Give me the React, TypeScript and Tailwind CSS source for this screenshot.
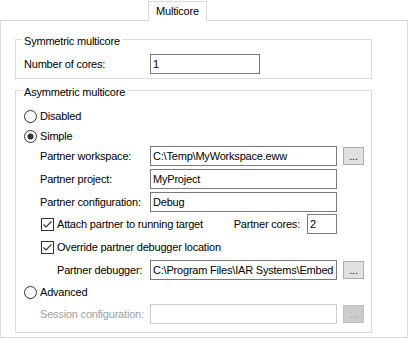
import React from 'react';

const Radio: React.FC<{ checked?: boolean }> = ({ checked }) => (
  <svg width="13" height="13" viewBox="0 0 13 13" className="shrink-0">
    <circle cx="6.5" cy="6.5" r="6" fill="#fff" stroke="#333" strokeWidth="1" />
    {checked && <circle cx="6.5" cy="6.5" r="3" fill="#333" />}
  </svg>
);

const Check: React.FC = () => (
  <svg width="13" height="13" viewBox="0 0 13 13" className="shrink-0">
    <rect x="0.5" y="0.5" width="12" height="12" fill="#fff" stroke="#333" strokeWidth="1" />
    <polyline points="2.5,6.5 5,9 10.5,3.5" fill="none" stroke="#333" strokeWidth="1.1" />
  </svg>
);

const Field: React.FC<{ value?: string; width: string; disabled?: boolean }> = ({ value, width, disabled }) => (
  <div
    className={`${width} h-[20px] shrink-0 border bg-white pl-[2px] leading-[18px] overflow-hidden whitespace-nowrap ${
      disabled ? 'border-[#cccccc]' : 'border-[#7a7a7a]'
    }`}
  >
    {value}
  </div>
);

const Browse: React.FC<{ disabled?: boolean }> = ({ disabled }) => (
  <div
    className={`ml-[6px] w-[21px] h-[18px] shrink-0 border flex items-center justify-center leading-[10px] ${
      disabled ? 'bg-[#cccccc] border-[#bfbfbf] text-[#9a9a9a]' : 'bg-[#e1e1e1] border-[#adadad] text-black'
    }`}
  >
    ...
  </div>
);

const Legend: React.FC<{ children: React.ReactNode }> = ({ children }) => (
  <div className="-mt-[5px] ml-[6px] px-[2px] w-fit bg-white leading-[13px]">{children}</div>
);

export default function App() {
  return (
    <div
      className="w-[408px] h-[339px] bg-white text-black text-[11px] tracking-[-0.2px] pt-px"
      style={{ fontFamily: '"Liberation Sans", Arial, sans-serif' }}
    >
      {/* Tab strip */}
      <div className="relative z-10 ml-[148px] w-[59px] h-[20px] border border-b-0 border-[#d9d9d9] bg-white flex items-center justify-center leading-[13px]">
        Multicore
      </div>

      {/* Tab page */}
      <div className="-mt-px w-[408px] h-[318px] border border-[#d9d9d9] pt-[18px] pl-[14px]">
        {/* Symmetric */}
        <div className="w-[357px] border border-[#dcdcdc] pb-[4px]">
          <Legend>Symmetric multicore</Legend>
          <div className="mt-[6px] pl-[8px] flex items-center h-[20px]">
            <div className="w-[126px]">Number of cores:</div>
            <Field value="1" width="w-[110px]" />
          </div>
        </div>

        {/* Asymmetric */}
        <div className="mt-[11px] w-[357px] h-[243px] border border-[#dcdcdc]">
          <Legend>Asymmetric multicore</Legend>

          <div className="mt-[7px] pl-[8px] h-[20px] flex items-center gap-[3px]">
            <Radio />
            <span>Disabled</span>
          </div>
          <div className="pl-[8px] h-[20px] flex items-center gap-[3px]">
            <Radio checked />
            <span>Simple</span>
          </div>

          <div className="pl-[24px] flex flex-col gap-[3px]">
            <div className="flex items-center h-[20px]">
              <div className="w-[110px]">Partner workspace:</div>
              <Field value="C:\Temp\MyWorkspace.eww" width="w-[187px]" />
              <Browse />
            </div>
            <div className="flex items-center h-[20px]">
              <div className="w-[110px]">Partner project:</div>
              <Field value="MyProject" width="w-[187px]" />
            </div>
            <div className="flex items-center h-[20px]">
              <div className="w-[110px]">Partner configuration:</div>
              <Field value="Debug" width="w-[187px]" />
            </div>
          </div>

          <div className="mt-[2px] pl-[25px] h-[20px] flex items-center">
            <Check />
            <span className="ml-[3px] flex-1">Attach partner to running target</span>
            <span className="mr-[7px]">Partner cores:</span>
            <Field value="2" width="w-[30px]" />
            <div className="w-[34px]" />
          </div>

          <div className="mt-[3px] pl-[25px] h-[20px] flex items-center">
            <Check />
            <span className="ml-[3px]">Override partner debugger location</span>
          </div>

          <div className="mt-[3px] pl-[41px] h-[20px] flex items-center">
            <div className="w-[93px]">Partner debugger:</div>
            <Field value="C:\Program Files\IAR Systems\Embed" width="w-[187px]" />
            <Browse />
          </div>

          <div className="mt-[2px] pl-[8px] h-[20px] flex items-center gap-[3px]">
            <Radio />
            <span>Advanced</span>
          </div>

          <div className="mt-[2px] pl-[24px] h-[20px] flex items-center">
            <div className="w-[110px] text-[#a0a0a0]">Session configuration:</div>
            <Field width="w-[187px]" disabled />
            <Browse disabled />
          </div>
        </div>
      </div>
    </div>
  );
}
